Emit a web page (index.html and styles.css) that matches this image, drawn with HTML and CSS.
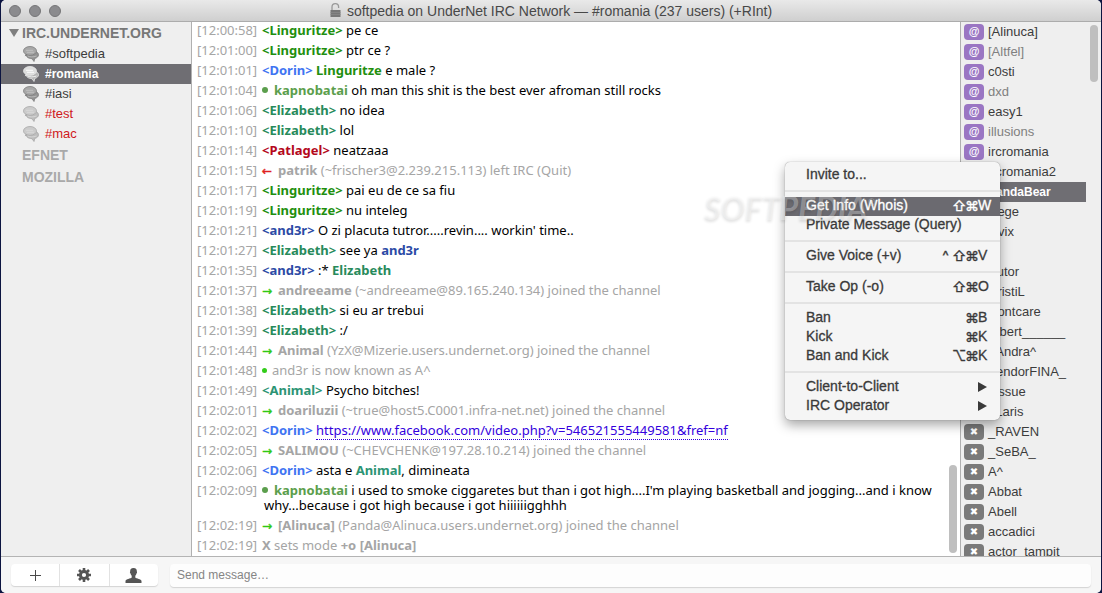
FILE: index.html
```html
<!DOCTYPE html>
<html lang="en">
<head>
<meta charset="utf-8">
<title>softpedia on UnderNet IRC Network</title>
<link rel="stylesheet" href="styles.css">
</head>
<body>
<svg class="defs" aria-hidden="true">
  <symbol id="chat" viewBox="0 0 16 16">
    <path d="M3 8c0 3 2.500 4.600 6 4.700l2 2.800.8-3.100c2.200-.5 3.700-1.800 3.700-3.600C15.500 6.500 13 5 9.500 5z" fill="var(--back)" stroke="var(--line)" stroke-width=".8"/>
    <ellipse cx="7" cy="4.900" rx="6.500" ry="4.400" fill="var(--front)" stroke="var(--line)" stroke-width=".8"/>
    <path d="M2.500 8.200 1.800 10.200 5 9.100z" fill="var(--line)"/>
    <path d="M3 4.300h7M4 6.300h7" stroke="var(--shine)" stroke-width=".9"/>
    <path d="M4.500 9.800c1.500 1.300 6 1.500 9 .2" fill="none" stroke="var(--shine)" stroke-width=".8"/>
  </symbol>
</svg>
<main class="window">
  <header class="titlebar">
    <div class="lights"><button aria-label="Close"></button><button aria-label="Minimize"></button><button aria-label="Zoom"></button></div>
    <h1 class="title">
      <svg width="11" height="15" viewBox="0 0 11 15" aria-hidden="true"><path d="M2 8V4a3.300 3.300 0 0 1 6.600 0v1" fill="none" stroke="#999" stroke-width="1.300"/><path d="M0.500 7h10v7h-10z" fill="#777"/><path d="M.5 9.500h10M.5 11.500h10" stroke="#8a8a8a" stroke-width=".7"/></svg>
      softpedia on UnderNet IRC Network — #romania (237 users) (+RInt)
    </h1>
  </header>

  <div class="panes">
    <nav class="sidebar">
      <h2 class="server open">IRC.UNDERNET.ORG</h2>
      <a class="channel" href="#softpedia"><svg><use href="#chat"/></svg>#softpedia</a>
      <a class="channel current" href="#romania"><svg><use href="#chat"/></svg>#romania</a>
      <a class="channel" href="#iasi"><svg><use href="#chat"/></svg>#iasi</a>
      <a class="channel away" href="#test"><svg><use href="#chat"/></svg>#test</a>
      <a class="channel away" href="#mac"><svg><use href="#chat"/></svg>#mac</a>
      <h2 class="server">EFNET</h2>
      <h2 class="server">MOZILLA</h2>
    </nav>

    <section class="chat">
      <div class="log">
        <p class="msg"><time>[12:00:58]</time><span><b class="ling">&lt;Linguritze&gt;</b> pe ce</span></p>
        <p class="msg"><time>[12:01:00]</time><span><b class="ling">&lt;Linguritze&gt;</b> ptr ce ?</span></p>
        <p class="msg"><time>[12:01:01]</time><span><b class="dorin">&lt;Dorin&gt;</b> <b class="ling">Linguritze</b> e male ?</span></p>
        <p class="msg"><time>[12:01:04]</time><span><b class="kapno"><i class="dot"></i>kapnobatai</b> oh man this shit is the best ever afroman still rocks</span></p>
        <p class="msg"><time>[12:01:06]</time><span><b class="eliza">&lt;Elizabeth&gt;</b> no idea</span></p>
        <p class="msg"><time>[12:01:10]</time><span><b class="eliza">&lt;Elizabeth&gt;</b> lol</span></p>
        <p class="msg"><time>[12:01:14]</time><span><b class="patl">&lt;Patlagel&gt;</b> neatzaaa</span></p>
        <p class="msg event"><time>[12:01:15]</time><span><i class="left">←</i><b>patrik</b> (~frischer3@2.239.215.113) left IRC (Quit)</span></p>
        <p class="msg"><time>[12:01:17]</time><span><b class="ling">&lt;Linguritze&gt;</b> pai eu de ce sa fiu</span></p>
        <p class="msg"><time>[12:01:19]</time><span><b class="ling">&lt;Linguritze&gt;</b> nu inteleg</span></p>
        <p class="msg"><time>[12:01:21]</time><span><b class="ander">&lt;and3r&gt;</b> O zi placuta tutror.....revin.... workin' time..</span></p>
        <p class="msg"><time>[12:01:27]</time><span><b class="eliza">&lt;Elizabeth&gt;</b> see ya <b class="ander">and3r</b></span></p>
        <p class="msg"><time>[12:01:35]</time><span><b class="ander">&lt;and3r&gt;</b> :* <b class="eliza">Elizabeth</b></span></p>
        <p class="msg event"><time>[12:01:37]</time><span><i class="join">→</i><b>andreeame</b> (~andreeame@89.165.240.134) joined the channel</span></p>
        <p class="msg"><time>[12:01:38]</time><span><b class="eliza">&lt;Elizabeth&gt;</b> si eu ar trebui</span></p>
        <p class="msg"><time>[12:01:39]</time><span><b class="eliza">&lt;Elizabeth&gt;</b> :/</span></p>
        <p class="msg event"><time>[12:01:44]</time><span><i class="join">→</i><b>Animal</b> (YzX@Mizerie.users.undernet.org) joined the channel</span></p>
        <p class="msg event"><time>[12:01:48]</time><span><i class="dot small"></i>and3r is now known as A^</span></p>
        <p class="msg"><time>[12:01:49]</time><span><b class="animal">&lt;Animal&gt;</b> Psycho bitches!</span></p>
        <p class="msg event"><time>[12:02:01]</time><span><i class="join">→</i><b>doariluzii</b> (~true@host5.C0001.infra-net.net) joined the channel</span></p>
        <p class="msg"><time>[12:02:02]</time><span><b class="dorin">&lt;Dorin&gt;</b> <a class="url" href="#video">https://www.facebook.com/video.php?v=546521555449581&amp;fref=nf</a></span></p>
        <p class="msg event"><time>[12:02:05]</time><span><i class="join">→</i><b>SALIMOU</b> (~CHEVCHENK@197.28.10.214) joined the channel</span></p>
        <p class="msg"><time>[12:02:06]</time><span><b class="dorin">&lt;Dorin&gt;</b> asta e <b class="animal">Animal</b>, dimineata</span></p>
        <p class="msg"><time>[12:02:09]</time><span><b class="kapno"><i class="dot"></i>kapnobatai</b> i used to smoke ciggaretes but than i got high....I'm playing basketball and jogging...and i know<br>why...because i got high because i got hiiiiiigghhh</span></p>
        <p class="msg event"><time>[12:02:19]</time><span><i class="join">→</i><b>[Alinuca]</b> (Panda@Alinuca.users.undernet.org) joined the channel</span></p>
        <p class="msg event"><time>[12:02:19]</time><span><b>X</b> sets mode <b>+o</b> <b>[Alinuca]</b></span></p>
      </div>
      <div class="thumb chat-thumb"></div>
    </section>

    <aside class="users">
      <ul>
        <li><span class="badge op">@</span>[Alinuca]</li>
        <li class="idle"><span class="badge op">@</span>[Altfel]</li>
        <li><span class="badge op">@</span>c0sti</li>
        <li class="idle"><span class="badge op">@</span>dxd</li>
        <li><span class="badge op">@</span>easy1</li>
        <li class="idle"><span class="badge op">@</span>illusions</li>
        <li><span class="badge op">@</span>ircromania</li>
        <li><span class="badge op">@</span>ircromania2</li>
        <li class="picked"><span class="badge op">@</span>PandaBear</li>
        <li><span class="badge op">@</span>Rege</li>
        <li><span class="badge op">@</span>Ovix</li>
        <li><span class="badge op">@</span>X</li>
        <li><span class="badge">✖</span>Autor</li>
        <li><span class="badge">✖</span>CristiL</li>
        <li><span class="badge">✖</span>Dontcare</li>
        <li><span class="badge">✖</span>Albert______</li>
        <li><span class="badge">✖</span>_Andra^</li>
        <li><span class="badge">✖</span>VendorFINA_</li>
        <li><span class="badge">✖</span>Tissue</li>
        <li><span class="badge">✖</span>_Laris</li>
        <li><span class="badge">✖</span>_RAVEN</li>
        <li><span class="badge">✖</span>_SeBA_</li>
        <li><span class="badge">✖</span>A^</li>
        <li><span class="badge">✖</span>Abbat</li>
        <li><span class="badge">✖</span>Abell</li>
        <li><span class="badge">✖</span>accadici</li>
        <li><span class="badge">✖</span>actor_tampit</li>
      </ul>
      <div class="thumb users-thumb"></div>

      <div class="menu" role="menu">
        <button role="menuitem">Invite to...</button>
        <hr>
        <button role="menuitem" class="hot">Get Info (Whois)<kbd><i>⇧</i><i>⌘</i><em>W</em></kbd></button>
        <button role="menuitem">Private Message (Query)</button>
        <hr>
        <button role="menuitem">Give Voice (+v)<kbd><i>^</i><i>⇧</i><i>⌘</i><em>V</em></kbd></button>
        <hr>
        <button role="menuitem">Take Op (-o)<kbd><i>⇧</i><i>⌘</i><em>O</em></kbd></button>
        <hr>
        <button role="menuitem">Ban<kbd><i>⌘</i><em>B</em></kbd></button>
        <button role="menuitem">Kick<kbd><i>⌘</i><em>K</em></kbd></button>
        <button role="menuitem">Ban and Kick<kbd><i>⌥</i><i>⌘</i><em>K</em></kbd></button>
        <hr>
        <button role="menuitem">Client-to-Client<span class="sub"></span></button>
        <button role="menuitem">IRC Operator<span class="sub"></span></button>
        <div class="mark">SOFTPEDIA<sup>®</sup></div>
      </div>
    </aside>
  </div>

  <footer class="footer">
    <div class="tools">
      <button aria-label="Add"><svg width="13" height="13" viewBox="0 0 13 13"><path d="M6.500 1v11M1 6.500h11" stroke="#4a4a4a" stroke-width="1"/></svg></button>
      <button aria-label="Settings"><svg width="14" height="14" viewBox="-7 -7 14 14"><circle r="3.600" fill="none" stroke="#555" stroke-width="3"/><path d="M0-7V-4M0 7V4M-7 0H-4M7 0H4M-5-5-3-3M5 5 3 3M-5 5-3 3M5-5 3-3" stroke="#555" stroke-width="2.600"/></svg></button>
      <button aria-label="User"><svg width="17" height="15" viewBox="0 0 17 15"><path d="M8.500 0C11 0 12 1.500 11.800 3.500c.5.200.3 1.700-.3 1.900-.2 1-.6 1.700-1.200 2.300v1.800c1 1.200 6 1.500 6.200 3.500v2H.5v-2c.2-2 5.200-2.300 6.200-3.500V7.700c-.6-.6-1-1.300-1.200-2.300-.6-.2-.8-1.700-.3-1.900C5 1.500 6 0 8.500 0z" fill="#555"/></svg></button>
    </div>
    <input class="entry" type="text" aria-label="Message" placeholder="Send message…">
  </footer>
</main>
</body>
</html>
```
FILE: styles.css
```css
* { box-sizing: border-box; }
body { margin: 0; background: #0c1440; font: 13px "Liberation Sans", Arial, sans-serif; color: #3c3c3c; }
button { border: 0; padding: 0; background: none; font: inherit; color: inherit; }
.defs { display: none; }

.window { display: flex; flex-direction: column; height: 100vh; margin: 0 1px; overflow: hidden; border-radius: 5px; background: #f6f6f6; }

.titlebar { position: relative; display: flex; justify-content: center; height: 22px; flex: none; background: linear-gradient(#e9e9e9, #cfcfcf); border-bottom: 1px solid #acacac; }
.lights { position: absolute; left: 8px; top: 5px; display: flex; gap: 8px; }
.lights button { width: 12px; height: 12px; border-radius: 50%; background: #8b8b8e; border: 1px solid #757577; }
.title { display: flex; align-items: center; gap: 6px; margin: 0; font-size: 14px; font-weight: normal; color: #484848; }

.panes { display: flex; flex: 1; min-height: 0; }

.sidebar { width: 191px; flex: none; background: #efefef; border-right: 1px solid #b0b0b0; }
.server { display: flex; align-items: center; height: 22px; margin: 0; padding-left: 21px; font-size: 14px; color: #a9a9a9; }
.server.open { padding-left: 8px; gap: 3px; color: #777; }
.server.open::before { content: ""; width: 0; border: solid transparent; border-width: 8px 5px 0; border-top-color: #7f7f7f; }
.channel { --line: #7c7c7c; --back: #929292; --front: #a8a8a8; --shine: #c2c2c2; display: flex; align-items: center; gap: 6px; height: 20px; padding-left: 22px; color: #3c3c3c; text-decoration: none; line-height: 22px; }
.channel svg { width: 16px; height: 16px; }
.channel.current { --line: #e8e8e8; --back: #b5b5b5; --front: #dedede; --shine: #fff; background: #6f6e73; color: #fff; font-size: 12px; font-weight: bold; }
.channel.away { --line: #a8a8a8; --back: #bdbdbd; --front: #cbcbcb; --shine: #dadada; color: #d01820; }

.chat { position: relative; flex: 1; min-width: 0; display: flex; flex-direction: column; justify-content: flex-end; background: #fff; overflow: hidden; }
.log { display: flex; flex-direction: column; gap: 5px; padding: 0 16px 3px 5px; font: 13px/15px "Noto Sans", "Open Sans", sans-serif; color: #000; }
.msg { display: flex; margin: 0; }
.msg time { width: 65px; flex: none; color: #a5a5a5; }
.msg span { padding-left: 2px; text-indent: -2px; white-space: nowrap; }
.msg.event { color: #a5a5a5; }
.msg i { font-style: normal; }
.dot { display: inline-block; width: 6px; height: 6px; margin: 0 6px 2px 0; border-radius: 50%; background: #5b9e4c; }
.dot.small { width: 5px; height: 5px; margin-right: 5px; background: #33cc1a; }
.left, .join { display: inline-block; width: 16px; text-indent: 0; font: 12px/12px "DejaVu Sans", sans-serif; -webkit-text-stroke: .4px; }
.left { color: #e02020; }
.join { color: #2fc912; }
.ling { color: #1f8f0f; }
.dorin { color: #3f74f2; }
.kapno { color: #5b9e4c; }
.eliza { color: #278a5b; }
.patl { color: #b4081c; }
.ander { color: #2b4aa5; }
.animal { color: #2c9474; }
.url { color: #3300dd; text-decoration: none; border-bottom: 1px dotted #3300dd; }

.thumb { position: absolute; width: 8px; border-radius: 4px; background: #bfbfbf; }
.chat-thumb { right: 3px; bottom: 3px; height: 88px; }
.users-thumb { right: 3px; top: 3px; height: 57px; }

.users { position: relative; width: 141px; flex: none; background: #efefef; border-left: 1px solid #b0b0b0; }
.users ul { height: 100%; margin: 0; padding: 0 15px 0 0; overflow: hidden; list-style: none; }
.users li { display: flex; align-items: center; gap: 4px; height: 20px; padding-left: 3px; line-height: 22px; }
.users .idle { color: #808080; }
.users .picked { background: #6f6e73; color: #fff; font-size: 12px; font-weight: bold; }
.badge { width: 20px; height: 16px; border-radius: 4px; background: #7a7a7a; color: #fff; font: bold 10px/16px "DejaVu Sans", sans-serif; text-align: center; }
.badge.op { background: #9a76c3; font: bold 11px/15px "Liberation Sans", sans-serif; }

.menu { position: absolute; right: 101px; top: 140px; width: 215px; padding: 4px 0; border-radius: 5px; background: #f5f5f5; box-shadow: 0 0 1px rgba(0,0,0,.5), 0 5px 12px rgba(0,0,0,.35); font-size: 14px; color: #3a3a3a; }
.menu button { display: flex; align-items: center; justify-content: space-between; width: 100%; height: 19px; padding: 0 9px 2px 21px; line-height: 17px; text-align: left; -webkit-text-stroke: .3px; }
.menu .hot { background: #6b6a70; color: #fff; }
.menu hr { height: 2px; margin: 5px 0; border: 0; background: #e3e3e3; }
.menu kbd { display: flex; align-items: center; font: inherit; line-height: 17px; }
.menu kbd i { width: 13px; font: 14px/17px Inter, "DejaVu Sans", sans-serif; text-align: center; }
.menu kbd em { width: 13px; font-style: normal; }
.sub { width: 9px; margin-right: 4px; border: solid transparent; border-width: 5px 0 5px 9px; border-left-color: #3a3a3a; }
.mark { position: absolute; left: -81px; top: 28px; font: italic bold 32px/36px Lato, sans-serif; color: rgba(255,255,255,.3); text-shadow: 0 2px 3px rgba(0,0,0,.12); pointer-events: none; }
.mark sup { font-size: 9px; line-height: 9px; vertical-align: 14px; }

.footer { display: flex; align-items: center; gap: 12px; height: 37px; flex: none; padding: 0 10px; border-top: 1px solid #b4b4b4; background: #f6f6f6; }
.tools { display: flex; width: 147px; height: 22px; border-radius: 4px; background: #fff; box-shadow: 0 1px 1px #d4d4d4; }
.tools button { display: flex; flex: 1; align-items: center; justify-content: center; }
.tools button + button { border-left: 1px solid #e2e2e2; }
.entry { flex: 1; height: 23px; padding: 0 7px; border: 0; border-radius: 4px; background: #fdfdfd; box-shadow: 0 1px 1px #d4d4d4; font: 12px "Liberation Sans", sans-serif; }
.entry::placeholder { color: #858585; }
```
